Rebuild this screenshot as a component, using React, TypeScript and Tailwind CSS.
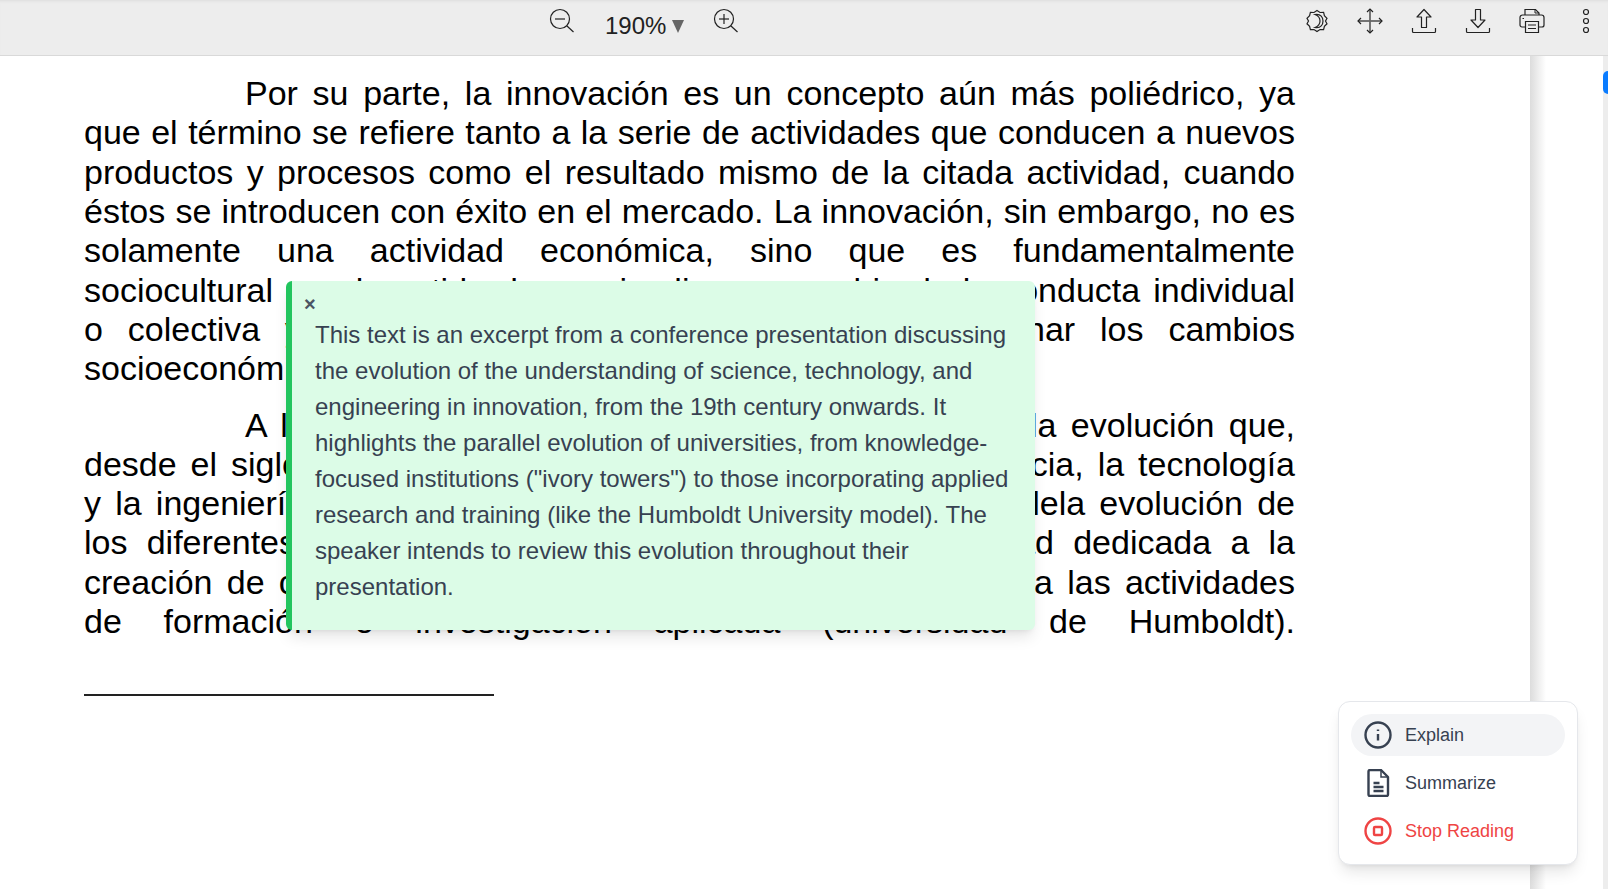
import { FC } from "react";

const paraOne = [
  "que el término se refiere tanto a la serie de actividades que conducen a nuevos",
  "productos y procesos como el resultado mismo de la citada actividad, cuando",
  "éstos se introducen con éxito en el mercado. La innovación, sin embargo, no es",
  "solamente una actividad económica, sino que es fundamentalmente",
  "sociocultural en el sentido de que implica un cambio de la conducta individual",
  "o colectiva y de esas instituciones capaces de determinar los cambios",
  "socioeconómicos.",
];

const paraTwo = [
  "desde el siglo XIX, ha experimentado el concepto de la ciencia, la tecnología",
  "y la ingeniería en la innovación, así como acerca de la paralela evolución de",
  "los diferentes modelos de universidad, desde la universidad dedicada a la",
  "creación de conocimiento, y hasta la que incorpora también a las actividades",
  "de formación e investigación aplicada (universidad de Humboldt).",
];

const Line: FC<{ text: string; last?: boolean }> = ({ text, last }) => (
  <div className={last ? "h-[39.3px] whitespace-nowrap" : "h-[39.3px] text-justify [text-align-last:justify]"}>
    {text}
  </div>
);

const ZoomIcon: FC<{ plus?: boolean }> = ({ plus }) => (
  <svg width="26" height="26" viewBox="0 0 26 26" fill="none" stroke="#222" strokeWidth="1.2">
    <circle cx="11" cy="11" r="9.5" />
    <path d="M6 11h10" />
    {plus && <path d="M11 6v10" />}
    <path d="M18 18l6.5 6" />
  </svg>
);

const ThemeIcon = () => (
  <svg width="24" height="24" viewBox="0 0 24 24" fill="none" stroke="#222" strokeWidth="1.2">
    <path d="M12 1.500l3 2 3.600-.2.8 3.400 2.600 2.600L20.500 12l1.500 2.800-2.600 2.500-.8 3.400-3.600-.2-3 2-3-2-3.600.2-.8-3.400L2 14.800 3.500 12 2 9.300l2.600-2.600.8-3.400 3.600.2z" />
    <path d="M10 5.500c4 1.500 5 3.500 5 6.500s-1 5-5 6.500c6 1 8-3 8-6.500s-2-7.500-8-6.500z" />
  </svg>
);

const MoveIcon = () => (
  <svg width="26" height="26" viewBox="0 0 26 26" fill="none" stroke="#222" strokeWidth="1.2">
    <path d="M13 1v24" />
    <path d="M1 13h24" stroke="#666" strokeWidth="1.8" />
    <path d="M10 4l3-3 3 3M10 22l3 3 3-3M4 10l-3 3 3 3M22 10l3 3-3 3" />
  </svg>
);

const UploadIcon = () => (
  <svg width="26" height="26" viewBox="0 0 26 26" fill="none" stroke="#222" strokeWidth="1.2">
    <path d="M13 1.500L6 9h4.500v10.500h5V9H20z" strokeLinejoin="round" />
    <path d="M1.500 20v3.500a1 1 0 001 1h21a1 1 0 001-1V20" />
  </svg>
);

const DownloadIcon = () => (
  <svg width="26" height="26" viewBox="0 0 26 26" fill="none" stroke="#222" strokeWidth="1.2">
    <path d="M13 19.500L6 12h4.500V1.500h5V12H20z" strokeLinejoin="round" />
    <path d="M1.500 20v3.500a1 1 0 001 1h21a1 1 0 001-1V20" />
  </svg>
);

const PrintIcon = () => (
  <svg width="26" height="26" viewBox="0 0 26 26" fill="none" stroke="#222" strokeWidth="1.2">
    <path d="M6 7V1.500h10.500L20 5v2" />
    <path d="M16 1.500V5h4" strokeWidth="1" />
    <path d="M6 19H3a2 2 0 01-2-2V9.500a2.500 2.500 0 012.500-2.500h19A2.500 2.500 0 0125 9.500V17a2 2 0 01-2 2h-3" />
    <path d="M6.500 13.500h13v11h-13z" />
    <path d="M9 17h8M9 20.500h8" />
    <path d="M3.500 10.500h1.500" />
  </svg>
);

const DotsIcon = () => (
  <svg width="10" height="26" viewBox="0 0 10 26" fill="none" stroke="#222" strokeWidth="1.2">
    <circle cx="5" cy="4" r="2.500" />
    <circle cx="5" cy="13" r="2.500" />
    <circle cx="5" cy="22" r="2.500" />
  </svg>
);

const InfoIcon = () => (
  <svg width="28" height="28" viewBox="0 0 28 28" fill="none" stroke="#374151" strokeWidth="2.4">
    <circle cx="14" cy="14" r="12.500" />
    <path d="M14 13v6.500M14 8.500v1.500" strokeWidth="2.400" />
  </svg>
);

const DocIcon = () => (
  <svg width="28" height="28" viewBox="0 0 28 28" fill="none" stroke="#374151" strokeWidth="2.4">
    <path d="M4.500 2.500a1.500 1.500 0 011.500-1.500H17l7 7v17.500a1.500 1.500 0 01-1.500 1.500H6a1.500 1.500 0 01-1.500-1.500z" strokeLinejoin="round" />
    <path d="M17 1v7h7" strokeWidth="1.500" />
    <path d="M9.500 14h6M9.500 18h10M9.500 22h10" />
  </svg>
);

const StopIcon = () => (
  <svg width="28" height="28" viewBox="0 0 28 28" fill="none" stroke="#ef4444" strokeWidth="2.4">
    <circle cx="14" cy="14" r="12.500" />
    <rect x="10" y="10" width="8" height="8" rx="1" strokeWidth="2.400" />
  </svg>
);

const App: FC = () => {
  return (
    <div className="relative h-[889px] w-[1608px] overflow-hidden bg-white font-['Liberation_Sans',Arial,sans-serif]">
      <div className="flex h-[56px] items-start justify-between border-b border-[#d9d9d9] bg-[#ededed] pl-[549px] pr-[17px] pt-[8px] shadow-[inset_0_3px_3px_-2px_#dcdcdc]">
        <div className="flex items-start">
          <ZoomIcon />
          <div className="ml-[30px] flex w-[108px] items-center text-[24px] leading-[36px] text-[#222]">
            190%
            <span className="ml-[6px] h-0 w-0 border-x-[6.500px] border-t-[13px] border-x-transparent border-t-[#666]" />
          </div>
          <ZoomIcon plus />
        </div>
        <div className="flex items-center gap-[28px]">
          <div className="-ml-[1px]">
            <ThemeIcon />
          </div>
          <MoveIcon />
          <UploadIcon />
          <DownloadIcon />
          <PrintIcon />
          <div className="ml-[8px]">
            <DotsIcon />
          </div>
        </div>
      </div>

      <div className="flex h-[833px]">
        <div className="w-[1530px] bg-white pl-[84px] pr-[235px] pt-[18.200px] text-[34px] leading-[39.300px] text-black">
          <div className="pl-[161px]">
            <Line text="Por su parte, la innovación es un concepto aún más poliédrico, ya" />
          </div>
          {paraOne.map((t, i) => (
            <Line key={i} text={t} last={i === paraOne.length - 1} />
          ))}
          <div className="mt-[17px] pl-[161px]">
            <Line text="A lo largo de esta ponencia me propongo revisar la evolución que," />
          </div>
          {paraTwo.map((t, i) => (
            <Line key={i} text={t} />
          ))}
          <div className="mt-[53px] h-[2px] w-[410px] bg-[#222]" />
        </div>
        <div className="flex-1 bg-white">
          <div className="h-full w-[16px] bg-gradient-to-r from-[#dcdcdc] to-white" />
        </div>
        <div className="w-[5px] bg-[#ededed] pt-[15px]">
          <div className="h-[23px] w-[5px] rounded-l-[5px] bg-[#0a7cff]" />
        </div>
      </div>

      <div className="absolute left-[286px] top-[281px] h-[349px] w-[749px] rounded-[6px] border-l-[6px] border-[#22c55e] bg-[#dcfce7] pl-[23px] pr-[19px] pt-[11px] text-[#374151] shadow-lg">
        <div className="-ml-[11px] h-[19px] text-[20px] font-bold leading-[24px] text-[#4b5563]">×</div>
        <p className="mt-[6px] text-[24px] leading-[36px]">
          This text is an excerpt from a conference presentation discussing the evolution of the understanding of
          science, technology, and engineering in innovation, from the 19th century onwards. It highlights the
          parallel evolution of universities, from knowledge-focused institutions ("ivory towers") to those
          incorporating applied research and training (like the Humboldt University model). The speaker intends to
          review this evolution throughout their presentation.
        </p>
      </div>

      <div className="absolute left-[1338px] top-[701px] flex h-[164px] w-[240px] flex-col gap-[6px] rounded-[12px] border border-[#e5e7eb] bg-white px-[12px] py-[12px] shadow-lg">
        <div className="flex h-[42px] items-center gap-[13px] rounded-full bg-[#f3f4f6] pl-[13px] text-[18px] text-[#374151]">
          <InfoIcon />
          Explain
        </div>
        <div className="flex h-[42px] items-center gap-[13px] pl-[13px] text-[18px] text-[#374151]">
          <DocIcon />
          Summarize
        </div>
        <div className="flex h-[42px] items-center gap-[13px] pl-[13px] text-[18px] text-[#ef4444]">
          <StopIcon />
          Stop Reading
        </div>
      </div>
    </div>
  );
};

export default App;
